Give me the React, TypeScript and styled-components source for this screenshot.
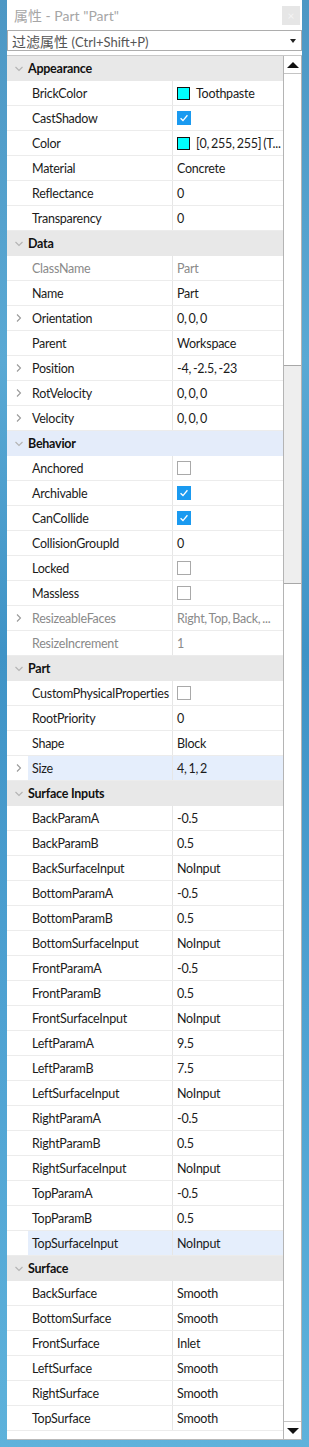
import React from "react";
import styled, {createGlobalStyle} from "styled-components";

type Prop = {
    name: string
    value?: string
    check?: boolean
    swatch?: string
    expand?: boolean
    disabled?: boolean
    active?: boolean
}

type Section = {
    title: string
    active?: boolean
    props: Prop[]
}

const sections: Section[] = [
    {
        title: "Appearance", props: [
            {name: "BrickColor", value: "Toothpaste", swatch: "#00ffff"},
            {name: "CastShadow", check: true},
            {name: "Color", value: "[0, 255, 255] (T...", swatch: "#00ffff"},
            {name: "Material", value: "Concrete"},
            {name: "Reflectance", value: "0"},
            {name: "Transparency", value: "0"},
        ]
    },
    {
        title: "Data", props: [
            {name: "ClassName", value: "Part", disabled: true},
            {name: "Name", value: "Part"},
            {name: "Orientation", value: "0, 0, 0", expand: true},
            {name: "Parent", value: "Workspace"},
            {name: "Position", value: "-4, -2.5, -23", expand: true},
            {name: "RotVelocity", value: "0, 0, 0", expand: true},
            {name: "Velocity", value: "0, 0, 0", expand: true},
        ]
    },
    {
        title: "Behavior", active: true, props: [
            {name: "Anchored", check: false},
            {name: "Archivable", check: true},
            {name: "CanCollide", check: true},
            {name: "CollisionGroupId", value: "0"},
            {name: "Locked", check: false},
            {name: "Massless", check: false},
            {name: "ResizeableFaces", value: "Right, Top, Back, ...", expand: true, disabled: true},
            {name: "ResizeIncrement", value: "1", disabled: true},
        ]
    },
    {
        title: "Part", props: [
            {name: "CustomPhysicalProperties", check: false},
            {name: "RootPriority", value: "0"},
            {name: "Shape", value: "Block"},
            {name: "Size", value: "4, 1, 2", expand: true, active: true},
        ]
    },
    {
        title: "Surface Inputs", props: [
            {name: "BackParamA", value: "-0.5"},
            {name: "BackParamB", value: "0.5"},
            {name: "BackSurfaceInput", value: "NoInput"},
            {name: "BottomParamA", value: "-0.5"},
            {name: "BottomParamB", value: "0.5"},
            {name: "BottomSurfaceInput", value: "NoInput"},
            {name: "FrontParamA", value: "-0.5"},
            {name: "FrontParamB", value: "0.5"},
            {name: "FrontSurfaceInput", value: "NoInput"},
            {name: "LeftParamA", value: "9.5"},
            {name: "LeftParamB", value: "7.5"},
            {name: "LeftSurfaceInput", value: "NoInput"},
            {name: "RightParamA", value: "-0.5"},
            {name: "RightParamB", value: "0.5"},
            {name: "RightSurfaceInput", value: "NoInput"},
            {name: "TopParamA", value: "-0.5"},
            {name: "TopParamB", value: "0.5"},
            {name: "TopSurfaceInput", value: "NoInput", active: true},
        ]
    },
    {
        title: "Surface", props: [
            {name: "BackSurface", value: "Smooth"},
            {name: "BottomSurface", value: "Smooth"},
            {name: "FrontSurface", value: "Inlet"},
            {name: "LeftSurface", value: "Smooth"},
            {name: "RightSurface", value: "Smooth"},
            {name: "TopSurface", value: "Smooth"},
        ]
    },
]

const Chevron = ({down}: { down?: boolean }) => (
    <svg width="10" height="10" viewBox="0 0 10 10">
        {down
            ? <path d="M1.5 3 L5 6.5 L8.5 3" fill="none" stroke="#b4b4b4" strokeWidth="1.1"/>
            : <path d="M3 1.5 L6.5 5 L3 8.5" fill="none" stroke="#9a9a9a" strokeWidth="1.1"/>}
    </svg>
)

const Tick = () => (
    <svg width="14" height="14" viewBox="0 0 14 14">
        <path d="M3 7.2 L5.8 10 L11 3.8" fill="none" stroke="#fff" strokeWidth="1.5"/>
    </svg>
)

export default function App() {
    return (
        <>
            <GlobalStyle/>
            <Desktop>
                <Window>
                    <TitleBar>
                        <Title>属性 - Part "Part"</Title>
                        <CloseBtn>×</CloseBtn>
                    </TitleBar>
                    <Filter>
                        <span>过滤属性 <Hint>(Ctrl+Shift+P)</Hint></span>
                        <Caret/>
                    </Filter>
                    <ListArea>
                        <Grid>
                            {sections.map(s => (
                                <React.Fragment key={s.title}>
                                    <Header $active={s.active}>
                                        <Gutter><Chevron down/></Gutter>
                                        {s.title}
                                    </Header>
                                    {s.props.map(p => (
                                        <Row key={p.name}>
                                            <Gutter>{p.expand && <Chevron/>}</Gutter>
                                            <NameCell $active={p.active} $disabled={p.disabled}>{p.name}</NameCell>
                                            <ValueCell $active={p.active} $disabled={p.disabled}>
                                                {p.check !== undefined && <CheckBox $on={p.check}>{p.check && <Tick/>}</CheckBox>}
                                                {p.swatch && <Swatch style={{background: p.swatch}}/>}
                                                {p.value && <ValueText>{p.value}</ValueText>}
                                            </ValueCell>
                                        </Row>
                                    ))}
                                </React.Fragment>
                            ))}
                        </Grid>
                        <ScrollBar>
                            <ArrowBtn><ArrowUp/></ArrowBtn>
                            <Track>
                                <Thumb/>
                            </Track>
                            <ArrowBtn><ArrowDown/></ArrowBtn>
                        </ScrollBar>
                    </ListArea>
                </Window>
            </Desktop>
        </>
    )
}

const GlobalStyle = createGlobalStyle`
  html, body {
    margin: 0;
    padding: 0;
  }

  body {
    font-family: "Lato", "Noto Sans CJK SC", sans-serif;
  }
`

const Desktop = styled.div`
  width: 309px;
  height: 1447px;
  box-sizing: border-box;
  padding: 0 7px 7px 7px;
  background: linear-gradient(180deg, #4d97c4 0%, #5aa9d4 25%, #3f93c6 45%, #4fa2d2 70%, #5eb2db 100%);
`

const Window = styled.div`
  height: 100%;
  background: #fff;
  display: flex;
  flex-direction: column;
  box-sizing: border-box;
  border-bottom: 1px solid #b9b9b9;
`

const TitleBar = styled.div`
  height: 30px;
  display: flex;
  align-items: center;
  justify-content: space-between;
  padding: 0 2px 0 7px;
`

const Title = styled.div`
  color: #a6a6a6;
  font-size: 14px;
`

const CloseBtn = styled.div`
  width: 18px;
  height: 19px;
  background: #e6e6e6;
  color: #f4f4f4;
  font-size: 12px;
  display: flex;
  align-items: center;
  justify-content: center;
`

const Filter = styled.div`
  height: 21px;
  box-sizing: border-box;
  border: 1px solid #adadad;
  display: flex;
  align-items: center;
  justify-content: space-between;
  padding: 0 5px 0 4px;
  color: #555;
  font-size: 14px;
`

const Hint = styled.span`
  font-size: 13px;
`

const Caret = styled.div`
  width: 0;
  height: 0;
  border-left: 3.5px solid transparent;
  border-right: 3.5px solid transparent;
  border-top: 4px solid #222;
`

const ListArea = styled.div`
  margin-top: 4px;
  flex: 1;
  display: flex;
  border-top: 1px solid #c8c8c8;
  border-right: 1px solid #b4b4b4;
  min-height: 0;
`

const Grid = styled.div`
  flex: 1;
  min-width: 0;
  display: flex;
  flex-direction: column;
  font-size: 12.5px;
  letter-spacing: -0.25px;
`

const Header = styled.div<{ $active?: boolean }>`
  height: 25px;
  box-sizing: border-box;
  display: flex;
  align-items: center;
  background: ${p => p.$active ? "#e4ecfa" : "#e8e8e8"};
  font-weight: 700;
  color: #111;
`

const Row = styled.div`
  height: 25px;
  box-sizing: border-box;
  display: flex;
  border-bottom: 1px solid #ececec;
`

const Gutter = styled.div`
  width: 21px;
  flex-shrink: 0;
  display: flex;
  align-items: center;
  justify-content: center;
  padding-left: 2px;
  box-sizing: border-box;
`

const NameCell = styled.div<{ $active?: boolean, $disabled?: boolean }>`
  width: 145px;
  flex-shrink: 0;
  box-sizing: border-box;
  padding-left: 4px;
  display: flex;
  align-items: center;
  border-right: 1px solid #e6e6e6;
  background: ${p => p.$active ? "#e5eefc" : "transparent"};
  color: ${p => p.$disabled ? "#8a8a8a" : "#1b1b1b"};
  white-space: nowrap;
  overflow: hidden;
`

const ValueCell = styled.div<{ $active?: boolean, $disabled?: boolean }>`
  flex: 1;
  min-width: 0;
  display: flex;
  align-items: center;
  gap: 6px;
  padding-left: 4px;
  background: ${p => p.$active ? "#e5eefc" : "transparent"};
  color: ${p => p.$disabled ? "#8a8a8a" : "#1b1b1b"};
  white-space: nowrap;
  overflow: hidden;
`

const ValueText = styled.span`
  word-spacing: -1px;
`

const CheckBox = styled.div<{ $on?: boolean }>`
  width: 14px;
  height: 14px;
  flex-shrink: 0;
  box-sizing: border-box;
  border: 1px solid ${p => p.$on ? "#1a9af0" : "#a9a9a9"};
  background: ${p => p.$on ? "#1a9af0" : "#fff"};
  display: flex;
  align-items: center;
  justify-content: center;
`

const Swatch = styled.div`
  width: 11px;
  height: 11px;
  flex-shrink: 0;
  border: 1px solid #111;
`

const ScrollBar = styled.div`
  width: 17px;
  flex-shrink: 0;
  display: flex;
  flex-direction: column;
  border-left: 1px solid #b4b4b4;
`

const ArrowBtn = styled.div`
  height: 17px;
  display: flex;
  align-items: center;
  justify-content: center;
  border-bottom: 1px solid #c4c4c4;

  &:last-child {
    border-bottom: none;
    border-top: 1px solid #c4c4c4;
  }
`

const ArrowUp = styled.div`
  width: 0;
  height: 0;
  border-left: 6px solid transparent;
  border-right: 6px solid transparent;
  border-bottom: 6px solid #111;
`

const ArrowDown = styled.div`
  width: 0;
  height: 0;
  border-left: 6px solid transparent;
  border-right: 6px solid transparent;
  border-top: 6px solid #111;
`

const Track = styled.div`
  flex: 1;
  padding-top: 291px;
`

const Thumb = styled.div`
  height: 219px;
  box-sizing: border-box;
  background: #eeeeee;
  border-top: 1px solid #a8a8a8;
  border-bottom: 1px solid #a8a8a8;
`
